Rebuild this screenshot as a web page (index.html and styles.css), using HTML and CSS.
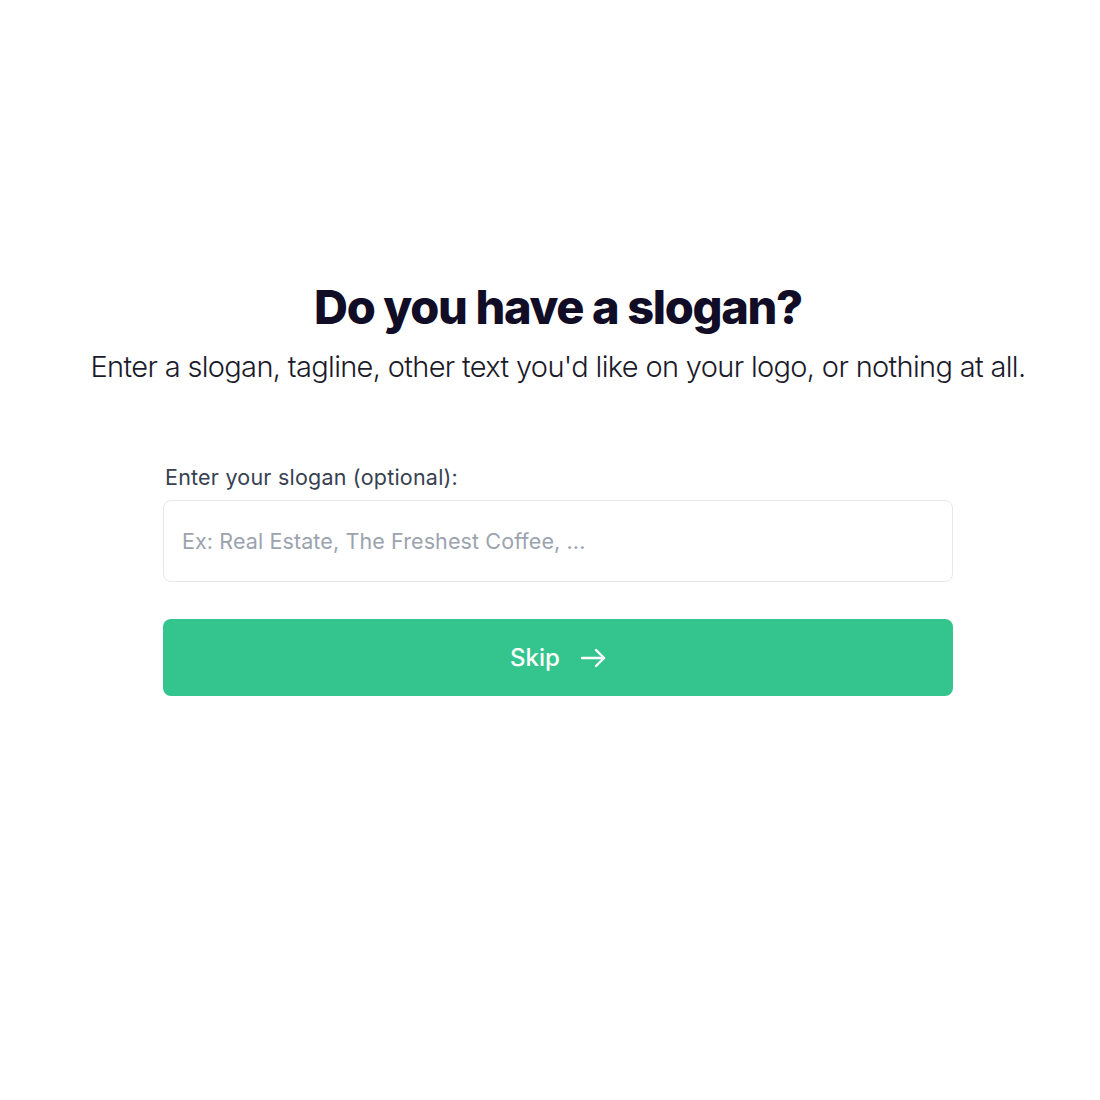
FILE: index.html
```html
<!DOCTYPE html>
<html lang="en">
<head>
<meta charset="utf-8">
<title>Slogan</title>
<link rel="stylesheet" href="styles.css">
</head>
<body>
<main class="page">
  <header class="intro">
    <h1 class="title">Do you have a slogan?</h1>
    <p class="subtitle">Enter a slogan, tagline, other text you'd like on your logo, or nothing at all.</p>
  </header>
  <form class="form">
    <label class="label" for="slogan">Enter your slogan (optional):</label>
    <input class="input" id="slogan" type="text" placeholder="Ex: Real Estate, The Freshest Coffee, ...">
    <button class="btn" type="button">
      <span>Skip</span>
      <svg class="arrow" width="26" height="20" viewBox="0 0 26 20" fill="none" stroke="currentColor" stroke-width="2.4" stroke-linecap="round" stroke-linejoin="round"><path d="M2 10h22"/><path d="M16 2l8 8-8 8"/></svg>
    </button>
  </form>
</main>
</body>
</html>
```
FILE: styles.css
```css
* { box-sizing: border-box; }
html, body { margin: 0; background: #ffffff; }
body {
  font-family: Inter, "Noto Sans", sans-serif;
  color: #111827;
  padding-left: 16px;
}
.page {
  display: flex;
  flex-direction: column;
  align-items: center;
  padding-top: 279px;
}
.intro {
  display: flex;
  flex-direction: column;
  align-items: center;
  text-align: center;
}
.title {
  margin: 0;
  font-size: 47px;
  line-height: 56px;
  font-weight: 800;
  letter-spacing: -1.35px;
  color: #110d26;
}
.subtitle {
  margin: 12px 0 0;
  font-size: 29px;
  line-height: 40px;
  font-weight: 300;
  letter-spacing: -0.023em;
  color: #1a1a2a;
}
.form {
  width: 790px;
  margin-top: 76px;
  display: flex;
  flex-direction: column;
}
.label {
  font-size: 21.5px;
  line-height: 28px;
  font-weight: 400;
  letter-spacing: 0.01em;
  color: #374151;
  padding-left: 2px;
  margin-bottom: 9px;
}
.input {
  height: 82px;
  border: 1px solid #e5e7eb;
  border-radius: 8px;
  padding: 0 18px;
  font-family: inherit;
  font-size: 21.5px;
  letter-spacing: 0.005em;
  color: #111827;
  outline: none;
}
.input::placeholder { color: #9ca3af; }
.btn {
  margin-top: 37px;
  height: 77px;
  border: 0;
  border-radius: 8px;
  background: #34c58e;
  color: #ffffff;
  font-family: inherit;
  font-size: 24px;
  font-weight: 500;
  display: flex;
  align-items: center;
  justify-content: center;
  gap: 20px;
  cursor: pointer;
}
.arrow { display: block; }
```
